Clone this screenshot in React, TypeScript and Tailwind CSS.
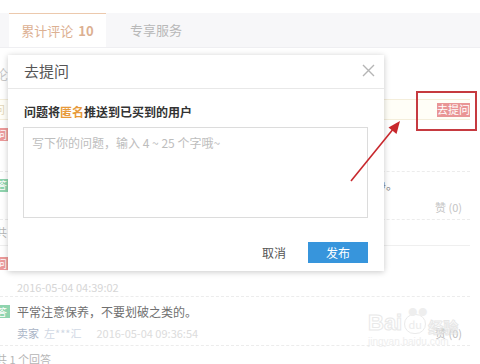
import React from "react";

const font = { fontFamily: '"Noto Sans CJK SC", "Noto Sans", sans-serif' };

function Badge({ kind }: { kind: "q" | "a" }) {
  return (
    <div
      className={`-ml-[6px] flex h-[13px] w-[16px] items-center justify-center text-[10px] leading-none text-white ${
        kind === "q" ? "bg-[#ec9a9a]" : "bg-[#8fd4ae]"
      }`}
    >
      {kind === "q" ? "问" : "答"}
    </div>
  );
}

export default function App() {
  return (
    <div style={font} className="relative h-[364px] w-[480px] overflow-hidden bg-white">
      {/* top spacer */}
      <div className="h-[13px]" />
      {/* tab band */}
      <div className="flex h-[35px] border-b border-[#efeff2] bg-[#f7f7f9]">
        <div className="ml-[9px] flex w-[97px] items-center justify-center gap-[5px] border-t border-[#ecc9ad] bg-white text-[13px] text-[#dcb092]">
          <span>累计评论</span>
          <span className="font-bold">10</span>
        </div>
        <div className="flex w-[100px] items-center justify-center text-[13px] text-[#b8b8b8]">专享服务</div>
      </div>

      {/* list */}
      <div className="flex flex-col pr-[10px]">
        <div className="flex h-[51px] items-center">
          <span className="-ml-[18px] text-[13px] text-[#c8c8c8]">评论</span>
        </div>
        <div className="flex h-[21px] items-center justify-between border-y border-[#f4eedb] bg-[#fffef7]">
          <span className="-ml-[6px] text-[11px] text-[#e2d6b8]">问</span>
          <span className="flex h-[14px] w-[33px] items-center justify-center bg-[#e99595] text-[11px] leading-none text-white">
            去提问
          </span>
        </div>
        <div className="flex h-[52px] flex-col border-b border-dashed border-[#ececec] pt-[8px]">
          <Badge kind="q" />
        </div>
        <div className="flex h-[48px] flex-col border-b border-dashed border-[#ececec] pt-[6px]">
          <div className="flex h-[14px] items-center">
            <Badge kind="a" />
            <span className="ml-auto mr-[72px] text-[12px] text-[#8a8a8a]">干净。</span>
          </div>
          <div className="mt-[8px] flex h-[14px] items-center justify-end pr-[8px] text-[11px] text-[#c4c4c4]">
            赞 (0)
          </div>
        </div>
        <div className="flex h-[26px] items-center border-b border-[#efefef]">
          <span className="-ml-[4px] text-[11px] text-[#b5b5b5]">共 1 个回答</span>
        </div>
        <div className="flex h-[51px] flex-col border-b border-dashed border-[#ececec] pt-[11px]">
          <Badge kind="q" />
          <div className="mt-[10px] pl-[17px] text-[11px] leading-[14px] text-[#d6d6d6]">2016-05-04 04:39:02</div>
        </div>
        <div className="flex h-[49px] flex-col border-b border-dashed border-[#ececec] pt-[8px]">
          <div className="flex h-[13px] items-center gap-[7px]">
            <Badge kind="a" />
            <span className="text-[12px] text-[#707070]">平常注意保养，不要划破之类的。</span>
          </div>
          <div className="mt-[8px] flex h-[14px] items-center pl-[17px] text-[11px]">
            <span className="text-[#a9b4c6]">卖家</span>
            <span className="ml-[5px] text-[#d0d8e4]">左***汇</span>
            <span className="ml-[15px] text-[#dcdcdc]">2016-05-04 09:36:54</span>
            <span className="ml-auto pr-[8px] text-[#bdbdbd]">赞 (0)</span>
          </div>
        </div>
        <div className="flex h-[26px] items-center">
          <span className="-ml-[4px] text-[11px] text-[#b5b5b5]">共 1 个回答</span>
        </div>
      </div>

      {/* watermark */}
      <div className="pointer-events-none absolute left-[368px] top-[312px] flex flex-col items-start opacity-70">
        <div className="flex items-end gap-[2px] leading-none">
          <span className="text-[22px] font-bold text-white [-webkit-text-stroke:1px_#e0e0e0]" style={{ fontFamily: '"Liberation Sans", sans-serif' }}>
            Bai
          </span>
          <span className="relative flex h-[20px] w-[22px] items-center justify-center rounded-full border border-[#e2e2e2] text-[11px] text-[#e4e4e4]">
            du
            <span className="absolute -top-[8px] left-[3px] text-[9px] tracking-[1px] text-[#e8e8e8]">●●</span>
          </span>
          <span className="text-[15px] font-bold text-white [-webkit-text-stroke:1px_#dedede]">经验</span>
        </div>
        <span className="mt-[3px] text-[10px] leading-none text-[#e8e8e8]" style={{ fontFamily: '"Liberation Sans", sans-serif' }}>
          jingyan.baidu.com
        </span>
      </div>

      {/* modal */}
      <div className="absolute left-[8px] top-[55px] flex h-[216px] w-[376px] flex-col bg-white shadow-[0_1px_6px_rgba(0,0,0,0.22)]">
        <div className="flex h-[34px] items-center justify-between border-b border-[#e8e8e8] pl-[16px] pr-[9px]">
          <span className="text-[15px] text-[#555]">去提问</span>
          <svg width="13" height="13" viewBox="0 0 13 13" className="-mt-[3px]">
            <path d="M1 1L12 12M12 1L1 12" stroke="#b5b5b5" strokeWidth="1.4" fill="none" />
          </svg>
        </div>
        <div className="pl-[16px] pt-[15px] text-[12px] font-bold leading-[16px] text-[#333]">
          问题将<span className="text-[#e79a3a]">匿名</span>推送到已买到的用户
        </div>
        <div className="ml-[15px] mt-[7px] h-[91px] w-[345px] border border-[#dcdcdc] px-[8px] pt-[7px] text-[12px] leading-[16px] text-[#bdbdbd]">
          写下你的问题，输入 4 ~ 25 个字哦~
        </div>
        <div className="mr-[16px] mt-[24px] flex justify-end gap-[4px]">
          <div className="flex h-[21px] w-[60px] items-center justify-center text-[12px] text-[#555]">取消</div>
          <div className="flex h-[21px] w-[60px] items-center justify-center bg-[#3795dc] text-[12px] text-white">发布</div>
        </div>
      </div>

      {/* red annotation box */}
      <div className="absolute left-[416px] top-[91px] h-[40px] w-[61px] border-2 border-[#c63a40]" />

      {/* red arrow */}
      <svg className="pointer-events-none absolute left-0 top-0" width="480" height="364">
        <line x1="351" y1="181" x2="394" y2="128" stroke="#c8282d" strokeWidth="1.6" />
        <polygon points="400,121 396.5,134 388.5,127.5" fill="#c8282d" />
      </svg>
    </div>
  );
}
